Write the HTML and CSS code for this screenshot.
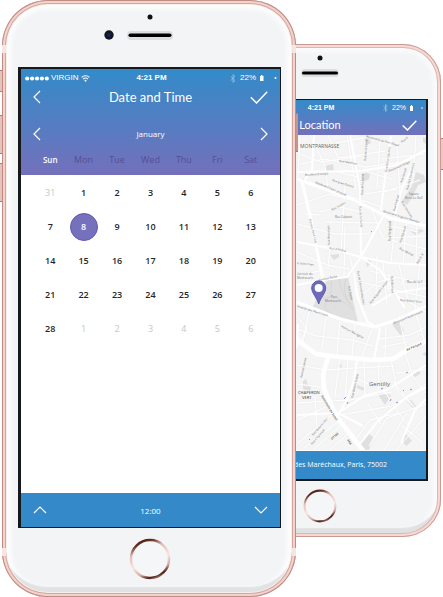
FILE: index.html
```html
<!DOCTYPE html>
<html lang="en">
<head>
<meta charset="utf-8">
<meta name="viewport" content="width=device-width, initial-scale=1">
<title>Date and Time</title>
<link rel="stylesheet" href="styles.css">
</head>
<body>
<main class="stage">
  <section class="phone phone-back" aria-label="Location">
    <span class="side-key key-power"></span>
    <div class="sensors">
      <svg width="44" height="28" viewBox="0 0 44 28" aria-hidden="true">
        <circle cx="22" cy="3" r="2.500" fill="#111"/>
        <rect x="3" y="14" width="38" height="8" rx="4" fill="#dcdee0"/>
        <rect x="4" y="16.500" width="36" height="3" rx="1.500" fill="#000"/>
      </svg>
    </div>
    <div class="screen">
      <div class="status">
        <span></span>
        <span class="clock">4:21 PM</span>
        <span class="power">
          <svg width="5" height="8" viewBox="0 0 5 8" aria-hidden="true"><path d="M.5 2.200 4.300 5.800 2.500 7.500V.5L4.300 2.200.5 5.800" fill="none" stroke="#9cc6e4" stroke-width=".7"/></svg>
          <span>22%</span>
          <svg class="battery" width="14" height="6" viewBox="0 0 14 6" aria-hidden="true"><path d="M0 1h3v5H0zM1 0h1v1H1z" fill="#fff"/><circle cx="12" cy="3" r=".8" fill="#fff"/></svg>
        </span>
      </div>
      <header class="titlebar">
        <span></span>
        <h2>Location</h2>
        <button class="icon-btn" aria-label="Confirm location"><svg width="15" height="11" viewBox="0 0 15 11"><path d="M.7 5.500 5.500 10 14.300.8" fill="none" stroke="#fff" stroke-width="1.500"/></svg></button>
      </header>
      <svg class="map" viewBox="214 136 212 315" preserveAspectRatio="xMidYMid slice" role="img" aria-label="Street map">
        <rect x="214" y="136" width="212" height="315" fill="#f5f5f5"/>
        <g fill="#e0e0e0">
          <path d="M327 281 348 278 358 324 312 309Z"/>
          <path d="M364 138l4-1 3 7-4 2zM325 167l8-2 1 6-7 3zM362 175l8-2-1 7-6 3zM412 187l4-14 8 3 2 7-8 3-5 11-6 9-5-4zM330 256l9-1v3l-5 3zM406 229l9 3 6-2 3 2-9 4zM366 262l4-1 1 3-4 4zM392 324l8-1 4 9-3 5-7-9zM303 382l3-2 2 6 3 2-1 4-7-2zM377 394l14 2-6 10zM407 402l4-1 7 9-3 2zM362 440l7-5 4 3-4 13-10 1zM401 440l5-5 6 7-6 5zM410 375l7-4 4 3-6 4zM422 355l4-2v4zM423 138l3 1v6l-3-2zM338 366l3-1 1 3-2 1zM357 386l8 3-1 3-7-3z"/>
          <circle cx="303" cy="182" r="2.500"/>
        </g>
        <g fill="none" stroke="#d0d0d0" stroke-width=".6">
          <path d="M331 281q2 14-4 21t5 13M339 280q3 19 12 25M346 279q-6 16 8 31M323 299q14-5 30 12"/>
        </g>
        <g class="street-minor">
          <path d="M297 154 321 163 362 157M310 136 325 167 328 190M328 136 338 159 392 151M347 136 356 190M380 140 377 188M297 166 324 160 365 168 402 163M397 142 400 198M416 137 413 178M297 206 330 195 358 203M319 213 340 208 361 213M345 186 341 252M325 223 381 224M297 225 334 235 369 235M331 236 328 270M345 227 344 279M297 253 320 263 341 271M372 211 383 239 426 250M398 197 391 263M407 218 403 265M417 224 416 266M383 264 387 306M399 266 408 301M370 272 426 285M365 284 426 298M420 264 414 318M377 257 376 299M350 258 361 308"/>
          <path d="M297 317 307 330 296 350M309 313 303 343M326 318 322 350M340 320 337 355M355 324 352 357M372 330 362 358M386 328 385 358M399 317 406 350M415 313 424 340M297 330 317 337 352 341 373 347M379 340 410 336 426 328M382 348 407 343M297 366 326 371 355 369 394 367M297 385 321 388M340 359 335 397M348 361 345 401M364 361 365 397M379 364 378 392M391 360 397 391 413 407M405 354 413 378 426 394M297 404 326 402 350 401 392 393M298 421 326 408M340 416 392 407 426 385M298 444 332 416M303 450 339 422M313 451 346 422M330 451 351 432M356 440 370 421 398 414M369 447 387 419 426 405M384 451 407 414M396 451 426 417M401 426 423 444M397 374 426 370M368 405 381 425M383 390 403 420M393 382 418 413M298 393 315 398 317 430M352 377 372 387"/>
          <path d="M300 138 298 178M336 144 374 137M334 172 358 178M367 173 392 180M382 160 424 155M384 193 420 181M365 195 397 190M305 215 320 216M346 196 382 208M386 226 418 233M387 239 426 237M299 276 320 272M328 266 349 270M389 274 388 291 426 313M401 287 405 278M358 299 378 283 399 278"/>
        </g>
        <g class="street-mid">
          <path d="M297 243 329 249 361 258 390 264 426 266M385 214 361 258 347 278 323 281 297 286M361 258 381 272 405 309M354 274 357 297 368 324M372 307 393 294 426 289M350 136 360 190 361 257M391 137 386 171 381 211M297 173 360 172 397 166 426 151M415 163 402 189 395 217M366 322 380 330 374 360M357 361 354 382 347 401 338 416M297 416 338 414 363 427M338 414 364 397 387 391 426 366M360 445 378 422 407 398 426 388M401 444 415 411 426 400M298 325 297 348M314 136 312 171 302 185"/>
        </g>
        <g class="street-main">
          <path d="M297 180 350 199 390 219 426 227M302 182 311 221 323 281M297 303 340 320 374 328 397 321 426 307" stroke-width="3"/>
          <path d="M290 334 300 343 316 355 340 358 372 361 393 360 410 349 426 342M328 358 323 376 324 390 337 418 365 454" stroke-width="4.500"/>
        </g>
        <g class="street-label">
          <text transform="translate(366 138) rotate(16)">Boulevard de Port-Royal</text>
          <text transform="translate(402 144) rotate(-38)">Rue B</text>
          <text transform="translate(366 162) rotate(-86)">Rue de la Santé</text>
          <text transform="translate(387 173) rotate(-82)">Rue de la Glacière</text>
          <text transform="translate(339 163) rotate(9)">Rue Méchain</text>
          <text transform="translate(305 177) rotate(-4)">Boulevard Arago</text>
          <text transform="translate(389 173) rotate(-24)">Boulevard Arago</text>
          <text transform="translate(332 182) rotate(18)">Rue Jean Dolent</text>
          <text transform="translate(315 184) rotate(23)">Boulevard Saint-Jacques</text>
          <text transform="translate(363 196) rotate(-88)">Rue de la Santé</text>
          <text transform="translate(402 184) rotate(-72)">Rue Pascal</text>
          <text transform="translate(408 191) rotate(-76)">Rue des Cordelières</text>
          <text transform="translate(383 213) rotate(17)">Boulevard Auguste Blanqui</text>
          <text x="409" y="196">Square</text>
          <text x="405" y="200">René-Le Gall</text>
          <text transform="translate(395 212) rotate(-75)">Rue Vulpian</text>
          <text transform="translate(401 203) rotate(58)">Rue Corvisart</text>
          <text x="335" y="219">Rue Cabanis</text>
          <text transform="translate(332 212) rotate(-29)">Rue Leclerc</text>
          <text transform="translate(359 207) rotate(86)">Rue de la Santé</text>
          <text transform="translate(309 220) rotate(76)">Avenue René Coty</text>
          <text transform="translate(330 246) rotate(-92)">Rue Broussais</text>
          <text transform="translate(391 242) rotate(-90)">Rue Vergniaud</text>
          <text transform="translate(401 244) rotate(-72)">Rue Barrault</text>
          <text transform="translate(329 250) rotate(10)">Rue d'Alésia</text>
          <text transform="translate(399 250) rotate(28)">Rue Michal</text>
          <text transform="translate(418 265) rotate(-60)">Rue A. B</text>
          <text transform="translate(297 265) rotate(6)">e Saint-Yves</text>
          <text x="297" y="276">éservoir de</text>
          <text x="297" y="280">Montsouris</text>
          <text transform="translate(319 282) rotate(-11)">Avenue Reille</text>
          <text transform="translate(348 287) rotate(79)">Rue Gazan</text>
          <text transform="translate(357 272) rotate(80)">Rue de l'Amiral Mouchez</text>
          <text transform="translate(371 305) rotate(-53)">Rue Auguste Lançon</text>
          <text transform="translate(391 277) rotate(88)">Rue Barrault</text>
          <text x="407" y="284">Rue de la C</text>
          <text transform="translate(400 302) rotate(5)">Rue Brillat-Sava</text>
          <text x="331" y="299">Parc</text>
          <text x="325" y="303">Montsouris</text>
          <text transform="translate(297 308) rotate(17)">levards des Maréchaux</text>
          <text transform="translate(394 325) rotate(-22)">Boulevard Kellermann</text>
          <text transform="translate(341 328) rotate(28)">Avenue Mazagran</text>
          <text class="strong" transform="translate(407 352) rotate(-24)">Bd Périphé</text>
          <text transform="translate(302 379) rotate(-77)">Avenue Lénine</text>
          <text transform="translate(353 399) rotate(-77)">Rue Benoît Malon</text>
          <text class="strong" transform="translate(321 397) rotate(59)">Autoroute du Soleil</text>
          <text transform="translate(313 437) rotate(-48)">Rue Gabriel Péri</text>
          <text transform="translate(312 446) rotate(-48)">Rue Kleynhoff</text>
          <text class="strong" transform="translate(332 441) rotate(-42)">D7100</text>
          <text class="strong" transform="translate(347 441) rotate(56)">A6A</text>
        </g>
        <g class="area-label">
          <text x="300" y="149">MONTPARNASSE</text>
          <text class="town" x="369" y="387">Gentilly</text>
          <text class="quarter" x="298" y="395">CHAPERON</text>
          <text class="quarter" x="302" y="400">VERT</text>
        </g>
        <path d="M344 400l2-2M347 405l1-2M381 390l2-1M390 402l1-2M396 404l2-1M403 392l1-1M410 391l2-1M406 374l2-1M371 233l1-1M309 441l1-1" stroke="#8f93c8" stroke-width="1"/>
        <path d="M318.700 305C316.500 298 311.700 294 311.700 289A7 7.200 0 0 1 325.700 289C325.700 294 320.900 298 318.700 305Z" fill="#6e6bb9" stroke="#5c5aae" stroke-width="1"/>
        <circle cx="318.700" cy="289" r="4" fill="#fff"/>
      </svg>
      <footer class="bottom-bar address">7 Boulevard des Maréchaux, Paris, 75002</footer>
    </div>
    <div class="chin">
      <svg width="34" height="34" viewBox="0 0 42 42" aria-hidden="true">
        <circle cx="21" cy="21" r="19" fill="#f5f6f8" stroke="url(#ring)" stroke-width="2.500"/>
      </svg>
    </div>
  </section>

  <section class="phone phone-front" aria-label="Date and time">
    <span class="side-key key-mute"></span>
    <span class="side-key key-up"></span>
    <span class="side-key key-down"></span>
    <span class="side-key key-power"></span>
    <span class="antenna antenna-top"></span>
    <span class="antenna antenna-bottom"></span>
    <div class="sensors">
      <svg width="132" height="30" viewBox="0 0 132 30" aria-hidden="true">
        <circle cx="66" cy="4" r="2.500" fill="#111"/>
        <circle cx="25" cy="22" r="4.700" fill="#15151f"/>
        <circle cx="25" cy="22" r="2" fill="#18205c"/>
        <rect x="43" y="18" width="46" height="9" rx="4" fill="#dcdee0"/>
        <rect x="44.500" y="20.500" width="43" height="3.500" rx="1.700" fill="#000"/>
      </svg>
    </div>
    <div class="screen">
      <div class="status">
        <span class="carrier">
          <svg width="24" height="5" viewBox="0 0 24 5" aria-hidden="true"><g fill="#fff"><circle cx="2.200" cy="2.500" r="2.100"/><circle cx="7.100" cy="2.500" r="2.100"/><circle cx="12" cy="2.500" r="2.100"/><circle cx="16.900" cy="2.500" r="2.100"/><circle cx="21.800" cy="2.500" r="2.100"/></g></svg>
          <span>VIRGIN</span>
          <svg width="9" height="7" viewBox="0 0 9 7" aria-hidden="true"><path d="M.6 2.400a5.600 5.600 0 0 1 7.800 0M2.100 4.200a3.400 3.400 0 0 1 4.800 0" fill="none" stroke="#fff" stroke-width="1.100"/><path d="M3.300 5.400a1.800 1.800 0 0 1 2.400 0L4.500 6.900z" fill="#fff"/></svg>
        </span>
        <span class="clock">4:21 PM</span>
        <span class="power">
          <svg width="6" height="9" viewBox="0 0 5 8" aria-hidden="true"><path d="M.5 2.200 4.300 5.800 2.500 7.500V.5L4.300 2.200.5 5.800" fill="none" stroke="#9cc6e4" stroke-width=".7"/></svg>
          <span>22%</span>
          <svg class="battery" width="18" height="6" viewBox="0 0 18 6" aria-hidden="true"><path d="M0 1h3.500v5H0zM1 0h1.500v1H1z" fill="#fff"/><circle cx="15.500" cy="3" r="1" fill="#fff"/></svg>
        </span>
      </div>
      <header class="titlebar">
        <button class="icon-btn" aria-label="Back"><svg width="8" height="14" viewBox="0 0 8 14"><path d="M7 1 1 7l6 6" fill="none" stroke="#fff" stroke-width="1.200"/></svg></button>
        <h1>Date and Time</h1>
        <button class="icon-btn" aria-label="Confirm date"><svg width="18" height="13" viewBox="0 0 18 13"><path d="M.8 6.300 6.500 12 17.200.8" fill="none" stroke="#fff" stroke-width="1.500"/></svg></button>
      </header>
      <div class="monthbar">
        <button class="icon-btn" aria-label="Previous month"><svg width="8" height="14" viewBox="0 0 8 14"><path d="M7 1 1 7l6 6" fill="none" stroke="#fff" stroke-width="1.200"/></svg></button>
        <span>January</span>
        <button class="icon-btn" aria-label="Next month"><svg width="8" height="14" viewBox="0 0 8 14"><path d="M1 1l6 6-6 6" fill="none" stroke="#fff" stroke-width="1.200"/></svg></button>
      </div>
      <table class="calendar">
        <thead>
          <tr><th class="current" scope="col">Sun</th><th scope="col">Mon</th><th scope="col">Tue</th><th scope="col">Wed</th><th scope="col">Thu</th><th scope="col">Fri</th><th scope="col">Sat</th></tr>
        </thead>
        <tbody>
          <tr><td><button class="other">31</button></td><td><button>1</button></td><td><button>2</button></td><td><button>3</button></td><td><button>4</button></td><td><button>5</button></td><td><button>6</button></td></tr>
          <tr><td><button>7</button></td><td><button class="selected" aria-pressed="true">8</button></td><td><button>9</button></td><td><button>10</button></td><td><button>11</button></td><td><button>12</button></td><td><button>13</button></td></tr>
          <tr><td><button>14</button></td><td><button>15</button></td><td><button>16</button></td><td><button>17</button></td><td><button>18</button></td><td><button>19</button></td><td><button>20</button></td></tr>
          <tr><td><button>21</button></td><td><button>22</button></td><td><button>23</button></td><td><button>24</button></td><td><button>25</button></td><td><button>26</button></td><td><button>27</button></td></tr>
          <tr><td><button>28</button></td><td><button class="other">1</button></td><td><button class="other">2</button></td><td><button class="other">3</button></td><td><button class="other">4</button></td><td><button class="other">5</button></td><td><button class="other">6</button></td></tr>
        </tbody>
      </table>
      <footer class="bottom-bar timebar">
        <button class="icon-btn" aria-label="Later"><svg width="14" height="8" viewBox="0 0 14 8"><path d="M1 7l6-6 6 6" fill="none" stroke="#fff" stroke-width="1.200"/></svg></button>
        <span>12:00</span>
        <button class="icon-btn" aria-label="Earlier"><svg width="14" height="8" viewBox="0 0 14 8"><path d="M1 1l6 6 6-6" fill="none" stroke="#fff" stroke-width="1.200"/></svg></button>
      </footer>
    </div>
    <div class="chin">
      <svg width="42" height="42" viewBox="0 0 42 42" aria-hidden="true">
        <defs>
          <linearGradient id="ring" x1="0.2" y1="0" x2="0.6" y2="1">
            <stop offset="0" stop-color="#3c1710"/>
            <stop offset=".12" stop-color="#6b3023"/>
            <stop offset=".3" stop-color="#e3bdb5"/>
            <stop offset=".6" stop-color="#f8e6e3"/>
            <stop offset=".82" stop-color="#d9aaa0"/>
            <stop offset=".96" stop-color="#4a1d14"/>
            <stop offset="1" stop-color="#8a5245"/>
          </linearGradient>
        </defs>
        <circle cx="21" cy="21" r="19" fill="#f5f6f8" stroke="url(#ring)" stroke-width="2.500"/>
      </svg>
    </div>
  </section>
</main>
</body>
</html>
```

FILE: styles.css
```css
* {
  box-sizing: border-box;
}

body {
  margin: 0;
  background: #fff;
  color: #fff;
  font-family: "Open Sans", "Noto Sans", sans-serif;
}

button {
  margin: 0;
  padding: 0;
  border: 0;
  background: none;
  color: inherit;
  font: inherit;
  cursor: pointer;
}

svg {
  display: block;
}

/* Two handsets share the middle column so the front one overlaps the other. */
.stage {
  display: grid;
  grid-template-columns: 197fr 97fr 145fr;
  align-items: start;
  padding: 0 2px;
  overflow: hidden;
}

.phone {
  position: relative;
  display: flex;
  flex-direction: column;
  min-width: 0;
  grid-row: 1;
  background: #f3f4f6;
}

.phone-front {
  grid-column: 1 / 3;
  z-index: 2;
  padding: 0 15px 0 16px;
  border-radius: 46px;
  box-shadow:
    inset 0 0 0 1px #c18a82,
    inset 0 0 0 3px #f1d3ce,
    inset 0 0 0 4px #d6a59d,
    inset 0 0 0 5px #f8efed,
    inset 0 -10px 1px #e0e2e4,
    inset 0 0 4px 9px #fdfdfe;
}

.phone-back {
  grid-column: 2 / 4;
  margin-top: 44px;
  padding: 0 13px;
  border-radius: 38px;
  box-shadow:
    inset 0 0 0 1px #cd9a93,
    inset 0 0 0 3px #f4d9d5,
    inset 0 0 0 4px #dfb5af,
    inset 0 -9px 1px #dfe1e3,
    inset 0 0 4px 8px #fbfbfc;
}

.side-key {
  position: absolute;
  left: -2px;
  width: 2px;
  border: solid #b07a72;
  border-width: 1px 0;
  background: #e8c3bd;
}

.key-mute {
  top: 70px;
  height: 22px;
}

.key-up {
  top: 115px;
  height: 39px;
}

.key-down {
  top: 163px;
  height: 39px;
}

.key-power {
  left: 100%;
  top: 113px;
  height: 39px;
  background: #c9948c;
}

.phone-back .key-power {
  top: 94px;
  height: 32px;
  background: #ecc9c4;
}

.antenna {
  position: absolute;
  left: 0;
  right: 0;
  height: 8px;
  border: solid #f6e6e3;
  border-width: 0 4px;
}

.antenna-top {
  top: 45px;
}

.antenna-bottom {
  bottom: 41px;
}

.sensors {
  display: flex;
  justify-content: center;
}

.phone-front .sensors {
  height: 67px;
  padding-top: 13px;
}

.phone-back .sensors {
  height: 55px;
  padding-top: 11px;
}

.screen {
  display: flex;
  flex-direction: column;
  background: linear-gradient(#338bc9, #7470bb) top / 100% 106px no-repeat #fff;
  border: solid #16181c;
}

.phone-front .screen {
  min-height: 461px;
  border-width: 2px 1px 1px 3px;
}

.phone-back .screen {
  min-height: 382px;
  border-width: 1px 2px 2px;
  background-size: 100% 36px;
}

.status,
.titlebar,
.monthbar,
.timebar {
  display: grid;
  grid-template-columns: 1fr auto 1fr;
  align-items: center;
}

.status {
  height: 18px;
  padding: 0 2px 0 4px;
  font-family: "Liberation Sans", sans-serif;
  font-size: 8px;
  line-height: 10px;
}

.phone-back .status {
  height: 15px;
  font-size: 7px;
}

.clock {
  font-weight: 700;
}

.carrier,
.power {
  display: flex;
  align-items: center;
  gap: 2px;
}

.power {
  justify-content: flex-end;
  gap: 4px;
}

.titlebar,
.monthbar,
.timebar {
  padding: 0 12px;
}

.titlebar {
  height: 20px;
}

.phone-back .titlebar {
  padding: 0 9px;
}

.icon-btn:last-child {
  justify-self: end;
}

.icon-btn:first-child {
  justify-self: start;
}

h1,
h2 {
  margin: 0;
  font-family: Lato, sans-serif;
  font-weight: 400;
  font-size: 13px;
  line-height: 16px;
}

h2 {
  font-size: 11px;
}

.monthbar {
  height: 20px;
  margin-top: 17px;
  font-size: 8px;
  line-height: 12px;
}

.calendar {
  align-self: center;
  width: calc(100% - 25px);
  table-layout: fixed;
  border-collapse: collapse;
  font-size: 9px;
  line-height: 12px;
  text-align: center;
}

.calendar th {
  height: 32px;
  padding: 0;
  color: #554f96;
  font-weight: 400;
}

.calendar .current {
  color: #fff;
  font-size: 8px;
  font-weight: 600;
}

.calendar td {
  height: 34px;
  padding: 0;
  color: #25262b;
  font-weight: 600;
}

.calendar button {
  width: 28px;
  height: 28px;
  border-radius: 50%;
}

.calendar .other {
  color: #c6c6c8;
  font-weight: 400;
}

.calendar .selected {
  border: 1px solid #5f5bb4;
  background: #7571bd;
  color: #fff;
}

.bottom-bar {
  margin-top: auto;
  background: #348ac8;
  font-size: 8px;
}

.timebar {
  height: 34px;
}

.map {
  width: 100%;
  height: 315px;
}

.street-minor,
.street-mid,
.street-main {
  fill: none;
  stroke: #fff;
  stroke-linejoin: round;
}

.street-minor {
  stroke-width: 1;
}

.street-minor path {
  filter: drop-shadow(0 0 1px #ececec);
}

.street-mid {
  stroke-width: 2;
}

.street-label {
  fill: #777;
  font-size: 3px;
}

.street-label .strong {
  font-weight: 700;
}

.area-label {
  fill: #666;
  font-size: 5px;
}

.area-label .town {
  font-size: 6px;
}

.area-label .quarter {
  font-size: 4px;
  font-weight: 600;
}

.address {
  height: 28px;
  font-size: 7px;
  line-height: 28px;
  text-align: center;
  white-space: nowrap;
}

.chin {
  display: flex;
  justify-content: center;
}

.phone-front .chin {
  height: 69px;
  padding-top: 10px;
}

.phone-back .chin {
  height: 56px;
  padding-top: 8px;
}
```
